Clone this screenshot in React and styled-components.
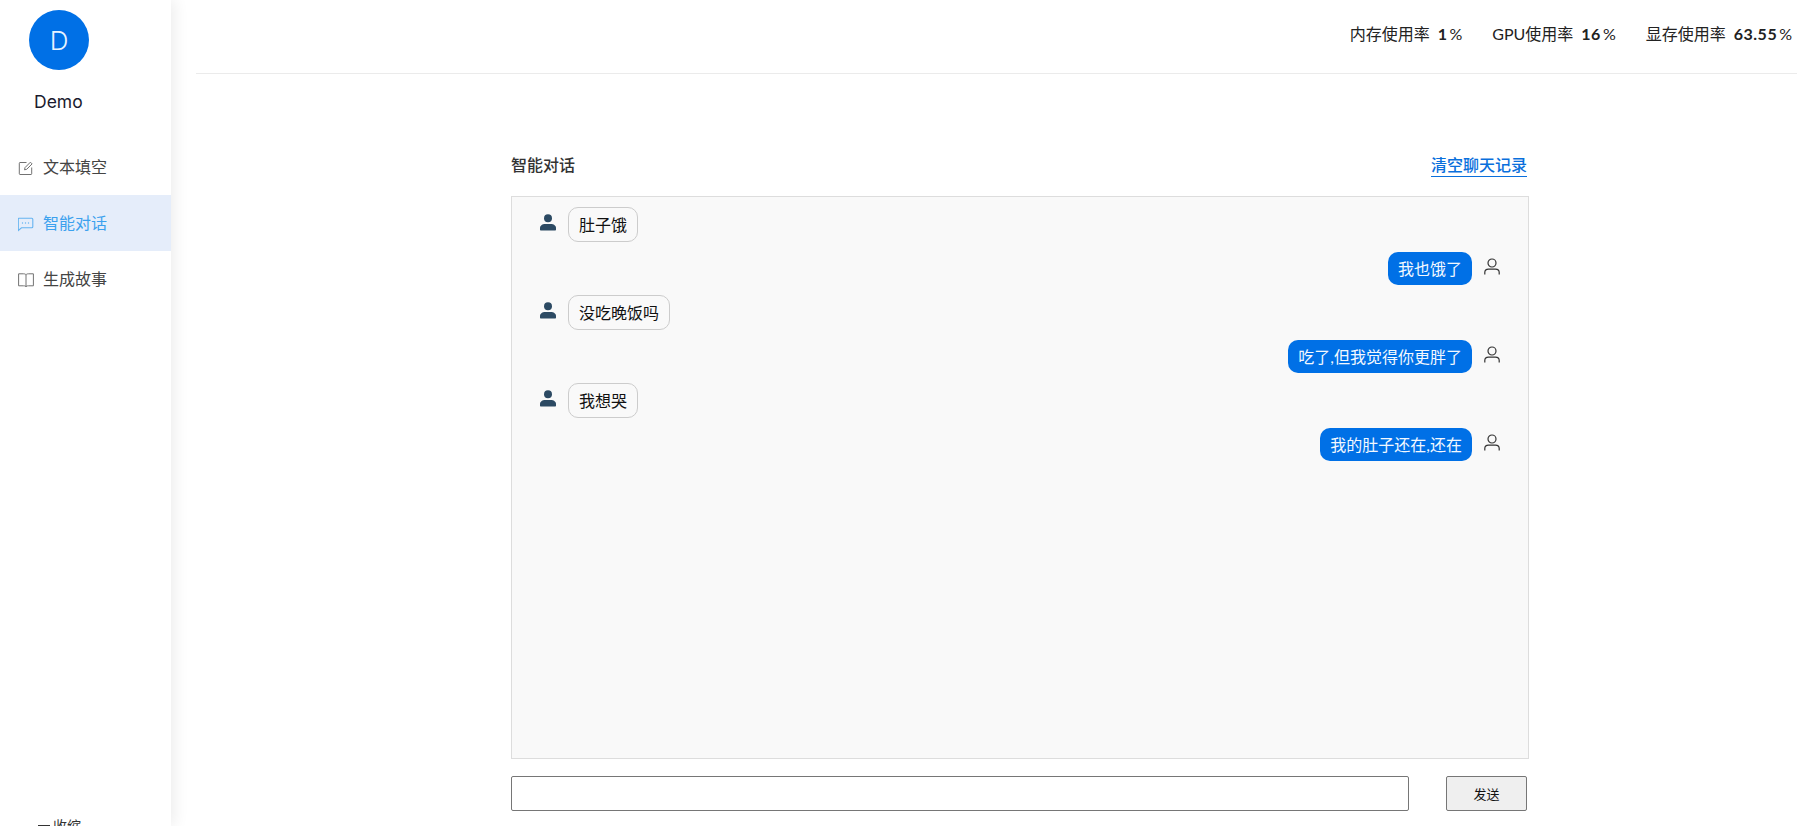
import React from "react";
import styled, { createGlobalStyle } from "styled-components";

const FONT = `"Lato", "Noto Sans CJK SC", sans-serif`;

const messages = [
  { from: "bot", text: "肚子饿" },
  { from: "me", text: "我也饿了" },
  { from: "bot", text: "没吃晚饭吗" },
  { from: "me", text: "吃了,但我觉得你更胖了" },
  { from: "bot", text: "我想哭" },
  { from: "me", text: "我的肚子还在,还在" },
];

const stats = [
  { label: "内存使用率", value: "1" },
  { label: "GPU使用率", value: "16" },
  { label: "显存使用率", value: "63.55" },
];

function EditIcon() {
  return (
    <svg width="16" height="16" viewBox="0 0 16 16" fill="none" stroke="currentColor" strokeWidth="1">
      <path d="M8.5 2.5H2a.7.7 0 0 0-.7.7v10.6c0 .4.3.7.7.7h11c.4 0 .7-.3.7-.7V7.5" />
      <path d="M6.5 9.8l.5-2.2 5.4-5.4 1.7 1.7-5.4 5.4z" />
    </svg>
  );
}

function ChatIcon() {
  return (
    <svg width="16" height="16" viewBox="1.5 0 16 16" fill="none" stroke="currentColor" strokeWidth="1.1">
      <path d="M2.2 2.2h13.100c.6 0 1 .4 1 1v7.600c0 .6-.4 1-1 1H5L1.800 14.500V2.800c0-.3.1-.6.4-.6z" />
      <circle cx="6" cy="7" r=".7" fill="currentColor" stroke="none" />
      <circle cx="9" cy="7" r=".7" fill="currentColor" stroke="none" />
      <circle cx="12" cy="7" r=".7" fill="currentColor" stroke="none" />
    </svg>
  );
}

function BookIcon() {
  return (
    <svg width="16" height="16" viewBox="0 0 16 16" fill="none" stroke="currentColor" strokeWidth="1">
      <path d="M.6 1.800h5c1.400 0 2.400.5 2.400 1.500 0-1 1-1.500 2.400-1.500h5v12h-5c-1.400 0-2.400.3-2.400 1.200 0-.9-1-1.200-2.400-1.200h-5z" />
      <path d="M8 3.300V15" />
    </svg>
  );
}

function SolidUser() {
  return (
    <svg width="16" height="17" viewBox="0 0 16 17" fill="#2c4a63">
      <circle cx="8" cy="4.300" r="4" />
      <path d="M0 14c0-2.500 2.600-4 5-4h6c2.400 0 5 1.500 5 4v1.400c0 .8-.4 1.100-1 1.100H1c-.6 0-1-.3-1-1.100z" />
    </svg>
  );
}

function LineUser() {
  return (
    <svg width="16" height="17" viewBox="0 0 16 17" fill="none" stroke="#333" strokeWidth="1.2">
      <circle cx="8" cy="5" r="4" />
      <path d="M.8 16.500v-2c0-2 1.700-3.300 3.700-3.300h7c2 0 3.700 1.300 3.700 3.300v2" />
    </svg>
  );
}

function App() {
  return (
    <>
      <GlobalStyle />
      <Page>
        <Sidebar>
          <Avatar>D</Avatar>
          <UserName>Demo</UserName>
          <Menu>
            <MenuItem>
              <MenuIcon><EditIcon /></MenuIcon>
              文本填空
            </MenuItem>
            <MenuItem $active>
              <MenuIcon><ChatIcon /></MenuIcon>
              智能对话
            </MenuItem>
            <MenuItem>
              <MenuIcon><BookIcon /></MenuIcon>
              生成故事
            </MenuItem>
          </Menu>
          <Collapse>
            <Dash />
            收缩
          </Collapse>
        </Sidebar>

        <Content>
          <Header>
            {stats.map((s) => (
              <Stat key={s.label}>
                {s.label}
                <strong>{s.value}</strong>
                <span>%</span>
              </Stat>
            ))}
          </Header>

          <Main>
            <TitleRow>
              <Title>智能对话</Title>
              <ClearLink>清空聊天记录</ClearLink>
            </TitleRow>
            <ChatBox>
              {messages.map((m, i) =>
                m.from === "bot" ? (
                  <BotRow key={i}>
                    <SolidUser />
                    <BotBubble>{m.text}</BotBubble>
                  </BotRow>
                ) : (
                  <MeRow key={i}>
                    <MeBubble>{m.text}</MeBubble>
                    <LineUser />
                  </MeRow>
                )
              )}
            </ChatBox>
            <InputRow>
              <TextInput type="text" />
              <SendButton>发送</SendButton>
            </InputRow>
          </Main>
        </Content>
      </Page>
    </>
  );
}

export default App;

const GlobalStyle = createGlobalStyle`
  html, body {
    margin: 0;
    padding: 0;
    background: #fff;
    overflow: hidden;
  }
  * {
    box-sizing: border-box;
  }
`;

const Page = styled.div`
  display: flex;
  height: 826px;
  overflow: hidden;
  font-family: ${FONT};
  font-size: 16px;
  color: #222;
`;

const Sidebar = styled.aside`
  width: 171px;
  flex-shrink: 0;
  height: 100%;
  overflow: hidden;
  display: flex;
  flex-direction: column;
  background: #fff;
  box-shadow: 4px 0 14px rgba(0, 0, 0, 0.07);
  padding-top: 10px;
`;

const Avatar = styled.div`
  width: 60px;
  height: 60px;
  margin-left: 29px;
  border-radius: 50%;
  background: #0070e6;
  color: #e8f3ff;
  font-family: "Inter", ${FONT};
  font-size: 26px;
  font-weight: 300;
  display: flex;
  align-items: center;
  justify-content: center;
`;

const UserName = styled.div`
  margin-top: 22px;
  padding-left: 34px;
  font-size: 17.500px;
  line-height: 20px;
  font-family: "Inter", ${FONT};
  color: #1a1a2e;
`;

const Menu = styled.nav`
  margin-top: 27px;
  display: flex;
  flex-direction: column;
`;

const MenuItem = styled.div`
  height: 56px;
  display: flex;
  align-items: center;
  padding: 0 0 2px 18px;
  font-size: 16px;
  color: ${(p) => (p.$active ? "#3ba1ee" : "#444")};
  background: ${(p) => (p.$active ? "#e5edfa" : "transparent")};
`;

const MenuIcon = styled.span`
  display: flex;
  width: 16px;
  margin: 3px 9px 0 0;
  opacity: 0.75;
`;

const Collapse = styled.div`
  margin-top: auto;
  margin-bottom: -11px;
  height: 24px;
  display: flex;
  align-items: center;
  padding-left: 38px;
  font-size: 14px;
  color: #333;
`;

const Dash = styled.span`
  width: 12px;
  height: 1px;
  background: #333;
  margin-right: 3px;
`;

const Content = styled.div`
  flex: 1;
  min-width: 0;
  padding-left: 25px;
`;

const Header = styled.header`
  height: 74px;
  border-bottom: 1px solid #ebebeb;
  display: flex;
  justify-content: flex-end;
  align-items: flex-start;
  gap: 30px;
  padding: 24px 5px 0 0;
`;

const Stat = styled.div`
  font-size: 16px;
  line-height: 20px;
  color: #222;

  strong {
    margin-left: 8px;
    font-weight: 700;
    letter-spacing: 0.5px;
  }

  span {
    margin-left: 2px;
    font-weight: 400;
  }
`;

const Main = styled.main`
  width: 1018px;
  margin-left: 315px;
  padding-top: 80px;
`;

const TitleRow = styled.div`
  height: 42px;
  display: flex;
  justify-content: space-between;
  align-items: flex-start;
`;

const Title = styled.h2`
  margin: 0;
  font-size: 16px;
  line-height: 22px;
  font-weight: 500;
  color: #333;
`;

const ClearLink = styled.a`
  margin-right: 2px;
  font-size: 16px;
  line-height: 22px;
  font-weight: 500;
  color: #0a6fdc;
  border-bottom: 1px solid #0a6fdc;
`;

const ChatBox = styled.div`
  height: 563px;
  background: #f9f9f9;
  border: 1px solid #ddd;
  padding: 10px 28px 0 28px;
  display: flex;
  flex-direction: column;
  gap: 10px;
`;

const BotRow = styled.div`
  height: 34px;
  display: flex;
  align-items: flex-start;
  gap: 12px;

  svg {
    margin-top: 7px;
  }
`;

const MeRow = styled.div`
  height: 34px;
  display: flex;
  justify-content: flex-end;
  align-items: flex-start;
  gap: 12px;

  svg {
    margin-top: 7px;
  }
`;

const BotBubble = styled.div`
  height: 35px;
  padding: 0 10px;
  line-height: 33px;
  border: 1px solid #ccc;
  border-radius: 10px;
  color: #111;
`;

const MeBubble = styled.div`
  height: 33px;
  margin-top: 1px;
  padding: 0 10px;
  line-height: 33px;
  border-radius: 10px;
  background: #0070e6;
  color: #f2f8ff;
`;

const InputRow = styled.div`
  margin-top: 17px;
  display: flex;
  justify-content: space-between;
  padding-right: 2px;
`;

const TextInput = styled.input`
  width: 898px;
  height: 35px;
  padding: 0 8px;
  border: 1px solid #767676;
  border-radius: 2px;
  background: #fff;
  outline: none;
`;

const SendButton = styled.button`
  width: 81px;
  height: 35px;
  border: 1px solid #767676;
  border-radius: 2px;
  background: #efefef;
  color: #111;
  font-family: ${FONT};
  font-size: 13px;
`;
